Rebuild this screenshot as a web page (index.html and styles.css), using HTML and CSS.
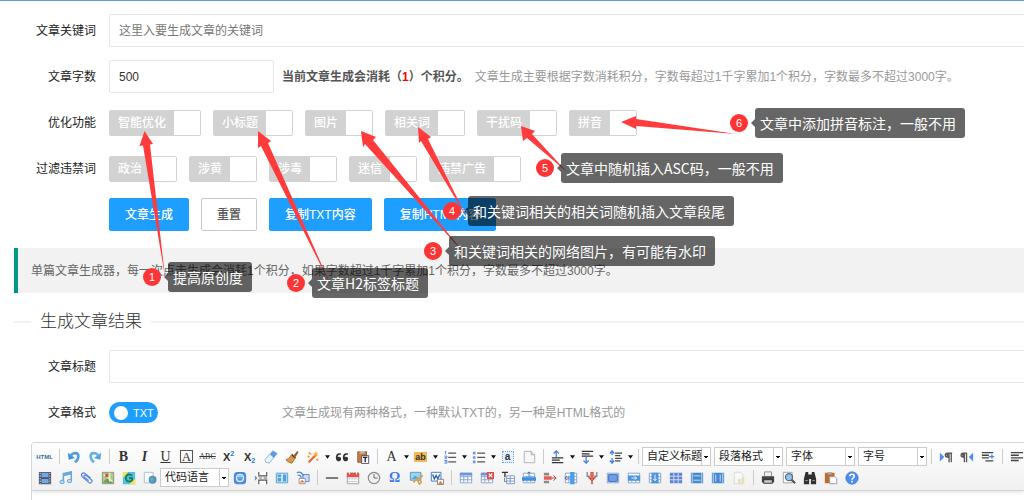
FILE: index.html
```html
<!DOCTYPE html>
<html lang="zh-CN">
<head>
<meta charset="utf-8">
<title>文章生成</title>
<link rel="stylesheet" href="styles.css">
</head>
<body>
<main class="page">
  <form class="form">
    <div class="row"><label class="name" for="kw">文章关键词</label><input class="text wide" id="kw" type="text" placeholder="这里入要生成文章的关键词"></div>
    <div class="row"><label class="name" for="count">文章字数</label><input class="text short" id="count" type="text" value="500"><p class="hint"><strong>当前文章生成会消耗（<b class="cost">1</b>）个积分。</strong>文章生成主要根据字数消耗积分，字数每超过1千字累加1个积分，字数最多不超过3000字。</p></div>
    <div class="row"><span class="name">优化功能</span>
      <div class="switches">
        <label class="switch"><span>智能优化</span><input type="checkbox"></label>
        <label class="switch"><span>小标题</span><input type="checkbox"></label>
        <label class="switch"><span>图片</span><input type="checkbox"></label>
        <label class="switch"><span>相关词</span><input type="checkbox"></label>
        <label class="switch"><span>干扰码</span><input type="checkbox"></label>
        <label class="switch"><span>拼音</span><input type="checkbox"></label>
      </div></div>
    <div class="row"><span class="name">过滤违禁词</span>
      <div class="switches">
        <label class="switch"><span>政治</span><input type="checkbox"></label>
        <label class="switch"><span>涉黄</span><input type="checkbox"></label>
        <label class="switch"><span>涉毒</span><input type="checkbox"></label>
        <label class="switch"><span>迷信</span><input type="checkbox"></label>
        <label class="switch"><span>违禁广告</span><input type="checkbox"></label>
      </div></div>
    <div class="row"><div class="actions">
      <button class="btn" type="button">文章生成</button>
      <button class="btn plain" type="reset">重置</button>
      <button class="btn" type="button">复制TXT内容</button>
      <button class="btn" type="button">复制HTML内容</button>
    </div></div>
  </form>
  <blockquote class="note">单篇文章生成器，每一次点击生成会消耗1个积分，如果字数超过1千字累加1个积分，字数最多不超过3000字。</blockquote>
  <h2 class="divider">生成文章结果</h2>
  <div class="row"><label class="name" for="title">文章标题</label><input class="text wide" id="title" type="text"></div>
  <div class="row"><label class="name" for="fmt">文章格式</label><div class="format"><label class="pill"><input type="checkbox" id="fmt" checked><span>TXT</span></label></div><p class="hint">文章生成现有两种格式，一种默认TXT的，另一种是HTML格式的</p></div>

  <section class="editor">
    <svg class="defs" aria-hidden="true"><defs>
      <g id="caret"><path d="M0 0h6L3 4z" fill="#111"/></g>
      <g id="grid"><path fill="#fff" stroke="#7f9ccb" d="M1.500 2.500h13v11h-13zM1.500 6.500h13M1.500 10h13M5.500 5v8M10 5v8"/></g>
    </defs></svg>
    <div class="bar">
      <div class="tools">
        <button class="tool html" type="button">HTML</button><i class="sep"></i>
        <button class="tool" type="button" aria-label="撤销"><svg viewBox="0 0 16 16"><path d="M1 3l1 8 7-2z" fill="#3d8fd6"/><path d="M4 7c3-5 9-4 9 0 0 3-1 5-4 7" fill="none" stroke="#559fdf" stroke-width="3"/></svg></button>
        <button class="tool" type="button" aria-label="重做"><svg viewBox="0 0 16 16"><path d="M15 3l-1 8-7-2z" fill="#4ba4dc"/><path d="M12 7c-3-5-9-4-9 0 0 3 1 5 4 7" fill="none" stroke="#68b3e3" stroke-width="3"/></svg></button><i class="sep"></i>
        <button class="tool glyph bold" type="button">B</button>
        <button class="tool glyph ital" type="button">I</button>
        <button class="tool glyph under" type="button">U</button>
        <button class="tool glyph" type="button"><span class="boxed">A</span></button>
        <button class="tool glyph abc" type="button">ABC</button>
        <button class="tool glyph x" type="button">X<sup>2</sup></button>
        <button class="tool glyph x" type="button">X<sub>2</sub></button>
        <button class="tool" type="button" aria-label="清除格式"><svg viewBox="0 0 16 16"><path d="M1 11L10 1l5 3-9 11-4-1z" fill="#e9f3fc" stroke="#86aede"/><path d="M7 5l3-4 5 3-4 5z" fill="#5f9ade"/></svg></button>
        <button class="tool" type="button" aria-label="格式刷"><svg viewBox="0 0 16 16"><path d="M10 6l4-5 1.500 1.500L12 8z" fill="#9d5c22"/><path d="M8 4l5 5-2 1-4-4z" fill="#634121"/><path d="M7 6l4 4-3 5c-3 0-5-2-7-4 2 0 4-2 6-5z" fill="#d89b4c" stroke="#a86c2a"/></svg></button>
        <button class="tool" type="button" aria-label="自动排版"><svg viewBox="0 0 16 16"><path d="M3 14l9-9" stroke="#e96a35" stroke-width="2.500"/><path d="M11 1l1 2 2 0-1.500 2L14 7l-3-1-1 2-1-3-2-1h3z" fill="#f9b541"/><path d="M3 3l3 2M2 7l2 1M12 10l2 2" stroke="#f19535" stroke-width="2"/></svg></button><button class="drop" type="button" aria-label="展开"><svg viewBox="0 0 6 4"><use href="#caret"/></svg></button>
        <button class="tool" type="button" aria-label="引用"><svg viewBox="0 0 16 16"><path d="M7 4C2 3 1 6 1 9c0 5 6 5 6 1 0-2-2-3-4-2 0-2 1-3 4-3zM15 4c-5-1-6 2-6 5 0 5 6 5 6 1 0-2-2-3-4-2 0-2 1-3 4-3z" fill="#333"/></svg></button>
        <button class="tool" type="button" aria-label="纯文本粘贴"><svg viewBox="0 0 16 16"><path d="M2 2h10v12H2z" fill="#c67b3b" stroke="#945225"/><path d="M4 1h6v3H4z" fill="#bbb"/><path d="M6.500 6.500h8v9h-8z" fill="#fff" stroke="#446"/><path d="M8 8.500h5M10.500 9v5" stroke="#223" stroke-width="1.500"/></svg></button><i class="sep"></i>
        <button class="tool glyph" type="button">A</button><button class="drop" type="button" aria-label="展开"><svg viewBox="0 0 6 4"><use href="#caret"/></svg></button>
        <button class="tool glyph" type="button"><span class="mark">ab</span></button><button class="drop" type="button" aria-label="展开"><svg viewBox="0 0 6 4"><use href="#caret"/></svg></button>
        <button class="tool" type="button" aria-label="有序列表"><svg viewBox="0 0 16 16"><path d="M3 1v4M2 2h1M1.500 7h3v1.500h-2v1.500h2M1.500 12h3v3h-3M2 13.500h2" stroke="#4c7dec" fill="none"/><path d="M6 3.500h9M6 8.500h9M6 13.500h9" stroke="#555" stroke-width="1.500"/></svg></button><button class="drop" type="button" aria-label="展开"><svg viewBox="0 0 6 4"><use href="#caret"/></svg></button>
        <button class="tool" type="button" aria-label="无序列表"><svg viewBox="0 0 16 16"><path d="M1 2h3v3H1zM1 7h3v3H1zM1 12h3v3H1z" fill="#6d92f1"/><path d="M6 3.500h9M6 8.500h9M6 13.500h9" stroke="#555" stroke-width="1.500"/></svg></button><button class="drop" type="button" aria-label="展开"><svg viewBox="0 0 6 4"><use href="#caret"/></svg></button>
        <button class="tool glyph" type="button"><span class="pick">a</span></button>
        <button class="tool" type="button" aria-label="清空文档"><svg viewBox="0 0 16 16"><path d="M2.500 1.500h8l4 4v9h-12z" fill="#f7f7f7" stroke="#aaa"/><path d="M10.500 1.500v4h4" fill="#ddd" stroke="#aaa"/></svg></button><i class="sep"></i>
        <button class="tool" type="button" aria-label="段前距"><svg viewBox="0 0 16 16"><path d="M6 8V1M3 4l3-3 3 3" stroke="#4c83e3" stroke-width="1.500" fill="none"/><path d="M1 9h13M1 11.500h9M1 14.500h13" stroke="#333" stroke-width="1.500"/></svg></button><button class="drop" type="button" aria-label="展开"><svg viewBox="0 0 6 4"><use href="#caret"/></svg></button>
        <button class="tool" type="button" aria-label="段后距"><svg viewBox="0 0 16 16"><path d="M7 8v7M4 12l3 3 3-3" stroke="#4c83e3" stroke-width="1.500" fill="none"/><path d="M2 1.500h13M2 4.500h9M2 7h13" stroke="#333" stroke-width="1.500"/></svg></button><button class="drop" type="button" aria-label="展开"><svg viewBox="0 0 6 4"><use href="#caret"/></svg></button>
        <button class="tool" type="button" aria-label="行间距"><svg viewBox="0 0 16 16"><path d="M3.500 1v5M1 4l2.500-3L6 4M3.500 9v6M1 12l2.500 3L6 12" stroke="#4c83e3" stroke-width="1.500" fill="none"/><path d="M7 3.500h8M7 6.500h6M7 9.500h8M7 12.500h6" stroke="#444" stroke-width="1.500"/></svg></button><button class="drop" type="button" aria-label="展开"><svg viewBox="0 0 6 4"><use href="#caret"/></svg></button><i class="sep"></i>
        <div class="picks">
          <select aria-label="自定义标题"><option>自定义标题</option></select>
          <select aria-label="段落格式"><option>段落格式</option></select>
          <select aria-label="字体"><option>字体</option></select>
          <select aria-label="字号"><option>字号</option></select>
        </div><i class="sep"></i>
        <button class="tool" type="button" aria-label="从左向右"><svg viewBox="0 0 16 16"><path d="M1 3l5 5-5 5z" fill="#4c8df0"/><path d="M15 3.500H9.500a2 2 0 0 0 0 4.500H11M11.500 3.500V14M14 3.500V14" stroke="#555" stroke-width="1.500" fill="none"/><path d="M8 4h3v4H9z" fill="#555"/></svg></button>
        <button class="tool" type="button" aria-label="从右向左"><svg viewBox="0 0 16 16"><path d="M15 3l-5 5 5 5z" fill="#4c8df0"/><path d="M8 3.500H3.500a2 2 0 0 0 0 4.500H5M5 3.500V14M7.500 3.500V14" stroke="#555" stroke-width="1.500" fill="none"/><path d="M2 4h3v4H3z" fill="#555"/></svg></button>
        <button class="tool" type="button" aria-label="首行缩进"><svg viewBox="0 0 16 16"><path d="M1 3h13M1 6h8M1 9h8M5 12.500h9" stroke="#444" stroke-width="1.500"/><path d="M9 7.500h6M12.500 5v5" stroke="#4c8df0" stroke-width="1.500"/></svg></button><i class="sep"></i>
        <button class="tool" type="button" aria-label="左对齐"><svg viewBox="0 0 16 16"><path d="M1 3h14M1 6h9M1 9h14M1 12h9" stroke="#444" stroke-width="1.500"/></svg></button>
      </div>
      <div class="tools">
        <button class="tool" type="button" aria-label="视频"><svg viewBox="0 0 16 16"><path d="M1 1h14v14H1z" fill="#4b5468"/><path d="M4 2h8v5H4zM4 9h8v5H4z" fill="#74a8e2"/><path d="M2.500 2v13M13.500 2v13" stroke="#e6e9f0" stroke-dasharray="1.500 1.500"/></svg></button>
        <button class="tool" type="button" aria-label="音乐"><svg viewBox="0 0 16 16"><path d="M5 12V3l9-2v10M5 5l9-2" fill="none" stroke="#6ba8d9" stroke-width="1.800"/><ellipse cx="3.500" cy="12.500" rx="2.500" ry="2" fill="#b6dcf4" stroke="#5f9fd2"/><ellipse cx="12" cy="11.500" rx="2.500" ry="2" fill="#b6dcf4" stroke="#5f9fd2"/></svg></button>
        <button class="tool" type="button" aria-label="附件"><svg viewBox="0 0 16 16"><path d="M12 8L6 3C3 1 0 4 3 7l7 6c2 2 5-1 3-3L7 5C5 4 4 6 5 7l5 4" fill="none" stroke="#5a86e0" stroke-width="1.400"/></svg></button>
        <button class="tool" type="button" aria-label="百度地图"><svg viewBox="0 0 16 16"><path d="M1.500 1.500h13v13h-13z" fill="#a9ca8c" stroke="#8d8d78"/><path d="M2 13l5-5 7 6" fill="#65a15d"/><path d="M3 4l10 8M10 2v10" stroke="#f4efc7" stroke-width="1.500"/><path d="M5 3h3v4H5z" fill="#d84e38"/></svg></button>
        <button class="tool" type="button" aria-label="谷歌地图"><svg viewBox="0 0 16 16"><path d="M1 1h14v14H1z" fill="#51bdeb"/><path d="M1 1h6L1 8zM15 15H8l7-6z" fill="#ffe24a"/><path d="M11.500 5.500a4 4 0 1 0 0 5V8H8" fill="none" stroke="#1e7e37" stroke-width="2"/></svg></button>
        <button class="tool" type="button" aria-label="框架"><svg viewBox="0 0 16 16"><path d="M1.500 1.500h10v12h-10z" fill="#f8fafc" stroke="#a9b9ca"/><circle cx="11" cy="10" r="4.500" fill="#4e91d4"/><path d="M8 9l3-2 1 3-2 3z" fill="#75bb5b"/></svg></button>
        <div class="picks"><select aria-label="代码语言"><option>代码语言</option></select></div>
        <button class="tool" type="button" aria-label="应用"><svg viewBox="0 0 16 16"><rect x="1" y="1" width="14" height="14" rx="4" fill="#4c88df"/><circle cx="8" cy="8" r="4.500" fill="#9fd0fa" stroke="#e2f2ff"/><path d="M5 8h6M6 10h4" stroke="#2b69bd"/></svg></button>
        <button class="tool" type="button" aria-label="分页"><svg viewBox="0 0 16 16"><path d="M5.500 1v4.500h9V1M5.500 15v-4.500h9V15" fill="#fff" stroke="#555" stroke-width="1.300"/><path d="M6 8h3M11 8h4" stroke="#555"/><path d="M1 5l3 3-3 3z" fill="#6b93c9"/></svg></button>
        <button class="tool" type="button" aria-label="模板"><svg viewBox="0 0 16 16"><path d="M1.500 2.500h13v11h-13z" fill="#d6edfb" stroke="#4e94ce"/><path d="M3 4h4v3H3zM3 8h4v4H3zM9 4h4v8H9z" fill="#4fa2df"/></svg></button>
        <button class="tool" type="button" aria-label="背景"><svg viewBox="0 0 16 16"><path d="M8 4h7v8H8z" fill="#c9dcf7" stroke="#5d7fb8"/><path d="M1 2c4-2 7 1 7 4M2 5c2-1 4 1 4 3" fill="none" stroke="#5584da" stroke-width="1.500"/><path d="M3.500 8.500h7v6h-7z" fill="#fff" stroke="#8b8f9d"/><path d="M4 13l3-3 3 3z" fill="#e77a2b"/></svg></button><i class="sep"></i>
        <button class="tool" type="button" aria-label="分隔线"><svg viewBox="0 0 16 16"><path d="M1 8h14" stroke="#555" stroke-width="1.500"/></svg></button>
        <button class="tool" type="button" aria-label="日期"><svg viewBox="0 0 16 16"><path d="M1.500 2.500h13v12h-13z" fill="#fafafa" stroke="#999"/><path d="M1 2h14v5H1z" fill="#e15252"/><path d="M4 1v3M12 1v3" stroke="#fff"/><path d="M3 9h10M3 12h10" stroke="#aaa" stroke-dasharray="2 1"/></svg></button>
        <button class="tool" type="button" aria-label="时间"><svg viewBox="0 0 16 16"><circle cx="8" cy="8" r="6.500" fill="#f0f0f0" stroke="#8c8c8c" stroke-width="1.300"/><path d="M8 3.500V8h4" fill="none" stroke="#555"/></svg></button>
        <button class="tool glyph omega" type="button">Ω</button>
        <button class="tool" type="button" aria-label="截屏"><svg viewBox="0 0 16 16"><path d="M1.500 1.500h12v9h-12z" fill="#9cd2ee" stroke="#5393bd"/><path d="M3 9l4-4 5 4" fill="#5ca6cf"/><path d="M13 4l2 2-3 2 2 5-2 2-3-6-4 4" fill="none" stroke="#d6a04f" stroke-width="1.800"/></svg></button>
        <button class="tool" type="button" aria-label="图片转存"><svg viewBox="0 0 16 16"><path d="M1.500 1.500h11v10h-11z" fill="#f5f9ff" stroke="#3971b8"/><path d="M3 4l2 5 2-4 2 4 2-5" fill="none" stroke="#2765b8" stroke-width="1.500"/><path d="M8.500 9.500h7v6h-7z" fill="#fff" stroke="#778"/><path d="M9 15l3-4 3 4z" fill="#e8822d"/></svg></button><i class="sep"></i>
        <button class="tool" type="button" aria-label="插入表格"><svg viewBox="0 0 16 16"><use href="#grid"/><path d="M1 2h14v3H1z" fill="#6c95dc"/></svg></button>
        <button class="tool" type="button" aria-label="删除表格"><svg viewBox="0 0 16 16"><use href="#grid"/><path d="M1 2h14v3H1z" fill="#6c95dc"/><path d="M8 1h8v8H8z" fill="#df4a45"/><path d="M10 3l4 4M14 3l-4 4" stroke="#fff" stroke-width="1.500"/></svg></button>
        <button class="tool" type="button" aria-label="表前插行"><svg viewBox="0 0 16 16"><path d="M1 1.500h7M4.500 1v6" stroke="#333" stroke-width="1.500"/><path d="M6.500 5.500h9v9h-9zM6 8.500h9M6 11.500h9M10.500 6v8" stroke="#708fc2" fill="#fff"/><path d="M4 8v4h2" stroke="#777" fill="none"/></svg></button>
        <button class="tool" type="button" aria-label="插入行"><svg viewBox="0 0 16 16"><use href="#grid"/><path d="M0 7h16v4H0z" fill="#3990e4"/><path d="M8 7V1M6 3l2-2 2 2" stroke="#406eb0" fill="none"/></svg></button>
        <button class="tool" type="button" aria-label="删除行"><svg viewBox="0 0 16 16"><path d="M1 2h6v3H1zM1 11h6v3H1z" fill="#8b8b8b"/><path d="M1 6h9v4H1z" fill="#e65c58"/><path d="M10 8h5M12 5l3 3-3 3" stroke="#a33" fill="none"/></svg></button>
        <button class="tool" type="button" aria-label="插入列"><svg viewBox="0 0 16 16"><use href="#grid"/><path d="M7 1h5v14H7z" fill="#4d9ce8"/><path d="M7 8H1M3 6L1 8l2 2" stroke="#406eb0" fill="none"/></svg></button>
        <button class="tool" type="button" aria-label="删除列"><svg viewBox="0 0 16 16"><path d="M2.500 1v5h3M13.500 1v5h-3" stroke="#888" stroke-width="1.500" fill="none"/><path d="M6 1h4v8H6z" fill="#e65c58"/><path d="M4 7l4 4 4-4M8 10v5" stroke="#b43c38" fill="none" stroke-width="1.500"/></svg></button>
        <button class="tool" type="button" aria-label="合并单元格"><svg viewBox="0 0 16 16"><use href="#grid"/><path d="M3 4h10v8H3z" fill="#6f9ce8" stroke="#3d69b5"/></svg></button>
        <button class="tool" type="button" aria-label="右合并"><svg viewBox="0 0 16 16"><use href="#grid"/><path d="M1 5h14v6H1z" fill="#4c94dc"/><path d="M5 8h6M9 6l2 2-2 2" stroke="#fff" fill="none"/></svg></button>
        <button class="tool" type="button" aria-label="下合并"><svg viewBox="0 0 16 16"><use href="#grid"/><path d="M4 2h8v12H4z" fill="#4c94dc"/><path d="M8 4v7M6 9l2 2 2-2" stroke="#fff" fill="none"/></svg></button>
        <button class="tool" type="button" aria-label="拆分单元格"><svg viewBox="0 0 16 16"><path d="M1 2h14v12H1z" fill="#5f83d0"/><path d="M1 6h14M1 10h14M5.500 2v12M10.500 2v12" stroke="#d7e4fa"/></svg></button>
        <button class="tool" type="button" aria-label="拆分行"><svg viewBox="0 0 16 16"><path d="M1 2h14v12H1z" fill="#4588cd"/><path d="M4 5.500h8M4 10.500h8M2.500 2v12M13.500 2v12" stroke="#d7e9fa"/></svg></button>
        <button class="tool" type="button" aria-label="拆分列"><svg viewBox="0 0 16 16"><path d="M1 2h14v12H1z" fill="#4588cd"/><path d="M5.500 4v8M10.500 4v8M2.500 2v12M13.500 2v12" stroke="#d7e9fa"/></svg></button>
        <button class="tool faded" type="button" aria-label="图表"><svg viewBox="0 0 16 16"><path d="M2.500 1.500h7l3 3v10h-10z" fill="#fff" stroke="#aaa"/><path d="M7 9h3v6H7zM11 7h3v8h-3z" fill="#d7c363"/></svg></button><i class="sep"></i>
        <button class="tool" type="button" aria-label="打印"><svg viewBox="0 0 16 16"><path d="M4 1h8v6H4z" fill="#eee" stroke="#888"/><path d="M1 6h14v7H1z" fill="#444"/><path d="M3 10h10v4H3z" fill="#ccc" stroke="#222"/></svg></button>
        <button class="tool" type="button" aria-label="预览"><svg viewBox="0 0 16 16"><path d="M1.500 1.500h10v12h-10z" fill="#fff" stroke="#999"/><circle cx="8" cy="7" r="4" fill="#91c7ec" stroke="#566b7c" stroke-width="1.500"/><path d="M11 10l4 4" stroke="#555" stroke-width="2.500"/></svg></button>
        <button class="tool" type="button" aria-label="查找"><svg viewBox="0 0 16 16"><path d="M3 1h3v3h4V1h3l2 8v6H9V9H7v6H1V9z" fill="#303030"/><path d="M2.500 11h3M10.500 11h3" stroke="#aaa"/></svg></button>
        <button class="tool" type="button" aria-label="粘贴"><svg viewBox="0 0 16 16"><path d="M1 2h11v12H1z" fill="#bf6b32"/><path d="M4 1h5v3H4z" fill="#aaa"/><path d="M6.500 6.500h6l2 2v6h-8z" fill="#fff" stroke="#999"/></svg></button>
        <button class="tool" type="button" aria-label="帮助"><svg viewBox="0 0 16 16"><circle cx="8" cy="8" r="7" fill="#4b8df1" stroke="#3773cf"/><path d="M5.500 6c0-3 5-3 5 0 0 2-2.500 1.500-2.500 4M8 11v2" fill="none" stroke="#fff" stroke-width="1.800"/></svg></button>
      </div>
    </div>
  </section>
</main>

<div class="notes">
  <svg class="arrows" width="1024" height="500" viewBox="0 0 1024 500" aria-hidden="true">
    <path d="M144.500 131L153 144l-3 .5L165 277l-22-131.500-3.500 .5z"/>
    <path d="M258 131l13 10-3 2L331 286l-70-140-3 2z"/>
    <path d="M361 131l15 6-3 3 91 113-99-109-2 3z"/>
    <path d="M418 127l13 10-3 2 39 79-46-77-2 2z"/>
    <path d="M521 126l14 5-3 3 35 38-40-34-4 3z"/>
    <path d="M621 122l15-6v3l100 15-100-8v3z"/>
  </svg>
  <div class="callout c1"><b>1</b><span>提高原创度</span></div>
  <div class="callout c2"><b>2</b><span>文章H2标签标题</span></div>
  <div class="callout c3"><b>3</b><span>和关键词相关的网络图片，有可能有水印</span></div>
  <div class="callout c4"><b>4</b><span>和关键词相关的相关词随机插入文章段尾</span></div>
  <div class="callout c5"><b>5</b><span>文章中随机插入ASC码，一般不用</span></div>
  <div class="callout c6"><b>6</b><span>文章中添加拼音标注，一般不用</span></div>
</div>
</body>
</html>
```
FILE: styles.css
```css
* { box-sizing: border-box; }
body { margin: 0; overflow: hidden; background: #fff; color: #333; font: 12px/18px "Liberation Sans", "Noto Sans CJK SC", sans-serif; }
button, input, select { font: inherit; color: inherit; margin: 0; }
p { margin: 0; }
.page { border-top: 1px solid #5fa0cc; padding-top: 13px; }

.row { display: flex; align-items: center; min-height: 33px; margin-bottom: 13px; white-space: nowrap; }
.name { width: 96px; margin-right: 13px; text-align: right; color: #222; flex: none; }
.text { height: 33px; border: 1px solid #e6e6e6; border-radius: 2px; padding: 0 9px; background: #fff; outline: 0; }
.text::placeholder { color: #777; opacity: 1; }
.wide { flex: 1; min-width: 0; border-right: 0; border-radius: 2px 0 0 2px; }
.short { width: 165px; }
.hint { color: #999; margin-left: 8px; }
.hint strong { color: #555; margin-right: 6px; }
.cost { color: #f00; }

.switches { display: flex; gap: 12px; }
.switch { display: flex; height: 26px; border: 1px solid #d2d2d2; border-radius: 2px; background: #d2d2d2; color: #fff; font-weight: 500; line-height: 24px; }
.switch span { padding: 0 8px; }
.switch input { appearance: none; width: 26px; height: 24px; background: #fff; }

.actions { display: flex; gap: 12px; margin-left: 109px; }
.btn { height: 33px; padding: 0 15px; border: 1px solid #1e9fff; border-radius: 2px; background: #1e9fff; color: #fff; font-weight: 500; }
.plain { background: #fff; border-color: #c9c9c9; color: #555; }

.note { margin: 17px 0 17px 14px; padding: 14px 13px 13px; border-left: 4px solid #009688; background: #f2f2f2; color: #666; }
.divider { display: flex; align-items: center; gap: 9px; margin: 0 0 16px 14px; font-size: 17px; font-weight: 300; line-height: 24px; color: #333; }
.divider::before, .divider::after { content: ""; height: 2px; background: #f2f2f2; width: 17px; }
.divider::after { flex: 1; }

.format { width: 165px; }
.pill { display: inline-flex; align-items: center; gap: 5px; height: 21px; width: 49px; padding-left: 5px; border-radius: 11px; background: #1e9fff; color: #fff; font-weight: 500; font-size: 11px; vertical-align: middle; }
.pill input { appearance: none; width: 14px; height: 14px; border-radius: 50%; background: #fff; }

.editor { margin-left: 31px; height: 80px; border: 1px solid #d4d4d4; border-right: 0; border-radius: 4px 0 0; overflow: hidden; }
.defs { display: none; }
.bar { padding: 3px 0 2px 2px; background: linear-gradient(#fff, #f0f0f0); border-bottom: 1px solid #d4d4d4; box-shadow: 0 1px 4px #ddd; }
.tools { display: flex; align-items: center; height: 21px; }
.tool { display: flex; align-items: center; justify-content: center; flex: none; width: 21px; height: 20px; padding: 0; border: 0; background: none; }
.tool svg { width: 14px; height: 14px; }
.drop { display: flex; align-items: center; justify-content: center; flex: none; width: 8px; height: 20px; padding: 0; border: 0; background: none; }
.drop svg { width: 5px; height: 4px; }
.sep { flex: none; width: 8px; height: 15px; background: linear-gradient(#ccc, #ccc) center / 1px 100% no-repeat; }
.html { font-size: 6px; font-weight: 700; color: #326da6; }
.glyph { font-family: "Liberation Serif", serif; font-size: 14px; line-height: 16px; color: #333; }
.bold { font-weight: 700; }
.ital { font-style: italic; font-weight: 700; }
.under { text-decoration: underline; }
.boxed { width: 13px; height: 13px; border: 1px solid #555; line-height: 12px; font-size: 13px; }
.abc { font-size: 8px; text-decoration: line-through; }
.x { font: 700 11px/14px "Liberation Sans", sans-serif; }
.x sup, .x sub { font-size: 7px; line-height: 7px; color: #2878e8; padding: 3px 0; }
.x sup { align-self: flex-start; }
.x sub { align-self: flex-end; }
.mark { padding: 0 1px; background: #f2ba55; font: 700 9px/10px "Liberation Sans", sans-serif; }
.pick { width: 12px; height: 12px; border: 1px dotted #6aa1ee; font: 700 10px/9px "Liberation Sans", sans-serif; background: #e6f1ff; }
.omega { color: #3d78ed; font-weight: 700; }
.faded { opacity: 0.4; }
.picks { display: flex; gap: 3px; }
.picks select { appearance: none; width: 69px; height: 19px; padding: 0 0 0 4px; border: 1px solid #ccc; border-radius: 0; font-size: 11px; color: #222; line-height: 17px; background: conic-gradient(from -45deg at 50% 100%, #111 90deg, #fff 0) right 2px center / 4px 2px no-repeat, linear-gradient(#ccc, #ccc) right 8px center / 1px 100% no-repeat, #fff; }

.notes { position: absolute; inset: 0; overflow: hidden; pointer-events: none; }
.arrows { position: absolute; left: 0; top: 0; fill: #ff3b3b; }
.callout { position: absolute; display: flex; align-items: center; gap: 7px; white-space: nowrap; }
.callout b { width: 18px; height: 18px; border-radius: 50%; background: #ff3535; color: #fff; font-size: 11px; font-weight: 400; line-height: 18px; text-align: center; }
.callout span { position: relative; padding: 0 9px 0 5px; border-radius: 3px; background: rgba(0, 0, 0, 0.6); color: #fff; font: 14px/30px "Noto Sans CJK SC", sans-serif; }
.callout span::before { content: ""; position: absolute; left: -4px; top: 11px; border: solid transparent; border-width: 4px 4px 4px 0; border-right-color: rgba(0, 0, 0, 0.6); }
.c1 { left: 143px; top: 262px; }
.c2 { left: 287px; top: 268px; }
.c3 { left: 424px; top: 236px; }
.c4 { left: 443px; top: 196px; }
.c5 { left: 536px; top: 153px; }
.c6 { left: 730px; top: 108px; }
```
